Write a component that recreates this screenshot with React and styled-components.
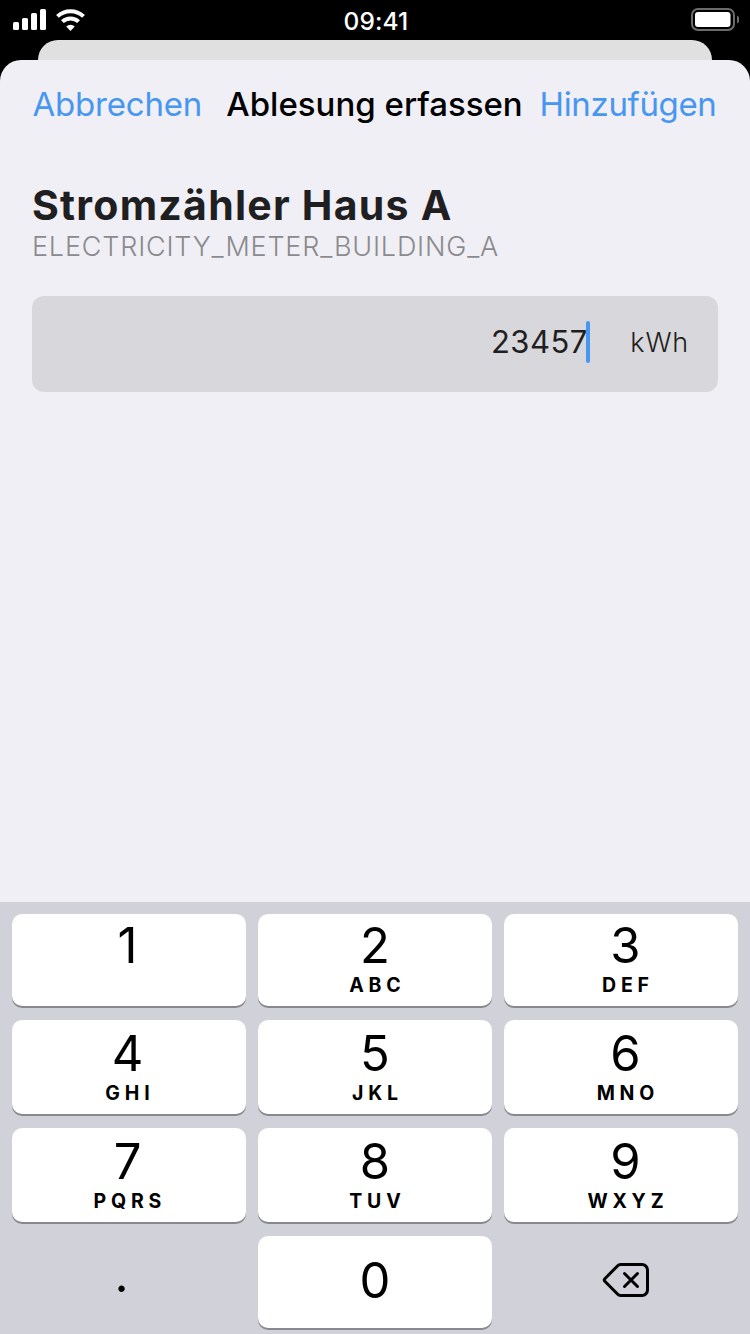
import styled, { createGlobalStyle } from "styled-components";

const GlobalStyle = createGlobalStyle`
  * {
    box-sizing: border-box;
  }
  body {
    margin: 0;
    background: #000;
    font-family: Inter, "Liberation Sans", sans-serif;
  }
`;

const Screen = styled.div`
  width: 750px;
  height: 1334px;
  display: flex;
  flex-direction: column;
  background: #000;
  overflow: hidden;
`;

const StatusBar = styled.div`
  height: 40px;
  padding: 0 11px 0 13px;
  display: grid;
  grid-template-columns: 1fr auto 1fr;
  align-items: center;
  color: white;
`;

const Signals = styled.div`
  display: flex;
  gap: 10px;
`;

const Time = styled.div`
  padding-top: 2px;
  font-size: 24.5px;
  font-weight: 500;
  line-height: 37px;
  letter-spacing: 0.1px;
`;

const Battery = styled.svg`
  justify-self: end;
`;

const BackCard = styled.div`
  height: 20px;
  margin: 0 38px;
  border-radius: 20px 20px 0 0;
  background: #e0e0e0;
`;

const Sheet = styled.main`
  flex: 1;
  display: flex;
  flex-direction: column;
  border-radius: 21px 21px 0 0;
  background: #f0eff5;
  overflow: hidden;
`;

const NavBar = styled.header`
  height: 88px;
  padding: 0 33.5px 0 32.5px;
  display: grid;
  grid-template-columns: 1fr auto 1fr;
  align-items: center;
`;

const NavButton = styled.button`
  padding: 0;
  border: 0;
  background: none;
  color: #4796f0;
  font: 400 33px/40px Inter, sans-serif;
  letter-spacing: ${(props) => props.$spacing};
  justify-self: ${(props) => props.$align};
`;

const NavTitle = styled.h1`
  margin: 0;
  color: #000;
  font-size: 33px;
  font-weight: 550;
  line-height: 40px;
  letter-spacing: 0;
`;

const Content = styled.section`
  flex: 1;
  padding: 32px 32px 0;
`;

const MeterName = styled.h2`
  margin: 0;
  color: #1f1f22;
  font-size: 41px;
  font-weight: 700;
  line-height: 50px;
  letter-spacing: 1.25px;
`;

const MeterId = styled.p`
  margin: 0;
  padding-top: 1px;
  color: #8b8a8d;
  font-size: 27px;
  font-weight: 300;
  line-height: 32px;
  letter-spacing: 0.8px;
`;

const Field = styled.div`
  height: 96px;
  margin-top: 33px;
  padding: 0 29px 4px 30px;
  display: flex;
  align-items: center;
  justify-content: flex-end;
  border-radius: 12px;
  background: #d8d7dc;
  color: #1f1f22;
`;

const Value = styled.span`
  font-size: 31px;
  font-weight: 400;
  line-height: 42px;
  letter-spacing: 0.5px;
`;

const Caret = styled.span`
  width: 4px;
  height: 42px;
  margin: 0 40.5px 0 -2px;
  border-radius: 2px;
  background: #4796f0;
`;

const Unit = styled.span`
  padding-top: 2px;
  font-size: 27px;
  font-weight: 350;
  line-height: 40px;
  letter-spacing: 0.8px;
`;

const Keyboard = styled.div`
  height: 432px;
  padding: 12px 12px 0;
  display: grid;
  grid-template-columns: repeat(3, 234px);
  grid-template-rows: 92px 94px 94px 92px;
  column-gap: 12px;
  row-gap: 14px;
  background: #d1d2d9;
`;

// The captions sit slightly off-centre in the outer columns
const columnPadding = ["0 3px 0 0", "0", "0 0 0 9px"];

const Key = styled.button`
  padding: ${(props) => columnPadding[props.$column]};
  border: 0;
  border-radius: 10px;
  display: flex;
  flex-direction: column;
  align-items: center;
  justify-content: ${(props) => (props.$centered ? "center" : "flex-end")};
  background: ${(props) => (props.$plain ? "transparent" : "#fff")};
  box-shadow: ${(props) => (props.$plain ? "none" : "0 2px 0 #88898e")};
  color: #000;
  font-family: inherit;
`;

const Digit = styled.span`
  font-size: 49px;
  font-weight: 390;
  line-height: 48px;
`;

const Zero = styled(Digit)`
  padding-bottom: 2px;
`;

const Letters = styled.span`
  height: 36px;
  padding-left: 4.8px;
  font-size: 19.5px;
  font-weight: 700;
  line-height: 30px;
  letter-spacing: 4.8px;
`;

const Dot = styled.span`
  padding: 0 12px 14px 0;
  font-size: 49px;
  line-height: 50px;
`;

const Delete = styled.span`
  height: 40px;
  padding-left: 1px;
`;

const keys = [
  ["1", ""],
  ["2", "ABC"],
  ["3", "DEF"],
  ["4", "GHI"],
  ["5", "JKL"],
  ["6", "MNO"],
  ["7", "PQRS"],
  ["8", "TUV"],
  ["9", "WXYZ"],
];

const SignalIcon = () => (
  <svg width="33" height="22" viewBox="0 0 33 22" fill="white">
    <rect x="0" y="13" width="6" height="8" rx="1.5" />
    <rect x="9" y="9" width="6" height="12" rx="1.5" />
    <rect x="18" y="4" width="6" height="17" rx="1.5" />
    <rect x="27" y="0" width="6" height="21" rx="1.5" />
  </svg>
);

const WifiIcon = () => (
  <svg width="29" height="22" viewBox="0 0 29 22" fill="none" stroke="white">
    <path d="M1.5 7.4a18.8 18.8 0 0 1 26 0" strokeWidth="4" />
    <path d="M6.4 12.6a11.8 11.8 0 0 1 16.2 0" strokeWidth="4" />
    <path d="M14.5 22l-4.3-4.5a6.4 6.4 0 0 1 8.6 0z" fill="white" stroke="none" />
  </svg>
);

const BatteryIcon = () => (
  <Battery width="48" height="24" viewBox="0 0 48 24">
    <rect x="1" y="1" width="42" height="21" rx="6" fill="none" stroke="#6b6b6b" strokeWidth="2" />
    <rect x="4" y="4" width="35.5" height="15" rx="3" fill="white" />
    <path d="M46 7.5a4.4 4.4 0 0 1 0 8z" fill="#6b6b6b" />
  </Battery>
);

const DeleteIcon = () => (
  <svg
    width="48"
    height="36"
    viewBox="0 0 48 36"
    fill="none"
    stroke="black"
    strokeWidth="3"
    strokeLinecap="round"
    strokeLinejoin="round"
  >
    <path d="M18.5 2.5H40a5.5 5.5 0 0 1 5.5 5.5v20a5.5 5.5 0 0 1-5.5 5.5H18.5a4 4 0 0 1-2.8-1.2L2.6 19a1.4 1.4 0 0 1 0-2L15.7 3.7a4 4 0 0 1 2.8-1.2z" />
    <path d="M22.5 11.5l13 13M35.5 11.5l-13 13" />
  </svg>
);

const App = () => {
  return (
    <Screen>
      <GlobalStyle />
      <StatusBar>
        <Signals>
          <SignalIcon />
          <WifiIcon />
        </Signals>
        <Time>09:41</Time>
        <BatteryIcon />
      </StatusBar>
      <BackCard />
      <Sheet>
        <NavBar>
          <NavButton $align="start" $spacing="-0.2px">Abbrechen</NavButton>
          <NavTitle>Ablesung erfassen</NavTitle>
          <NavButton $align="end" $spacing="-0.35px">Hinzufügen</NavButton>
        </NavBar>
        <Content>
          <MeterName>Stromzähler Haus A</MeterName>
          <MeterId>ELECTRICITY_METER_BUILDING_A</MeterId>
          <Field>
            <Value>23457</Value>
            <Caret />
            <Unit>kWh</Unit>
          </Field>
        </Content>
        <Keyboard>
          {keys.map(([digit, letters], i) => (
            <Key key={digit} $column={i % 3}>
              <Digit>{digit}</Digit>
              <Letters>{letters}</Letters>
            </Key>
          ))}
          <Key $column={0} $plain $centered>
            <Dot>.</Dot>
          </Key>
          <Key $column={1} $centered>
            <Zero>0</Zero>
          </Key>
          <Key $column={2} $plain $centered aria-label="Löschen">
            <Delete>
              <DeleteIcon />
            </Delete>
          </Key>
        </Keyboard>
      </Sheet>
    </Screen>
  );
};

export default App;
